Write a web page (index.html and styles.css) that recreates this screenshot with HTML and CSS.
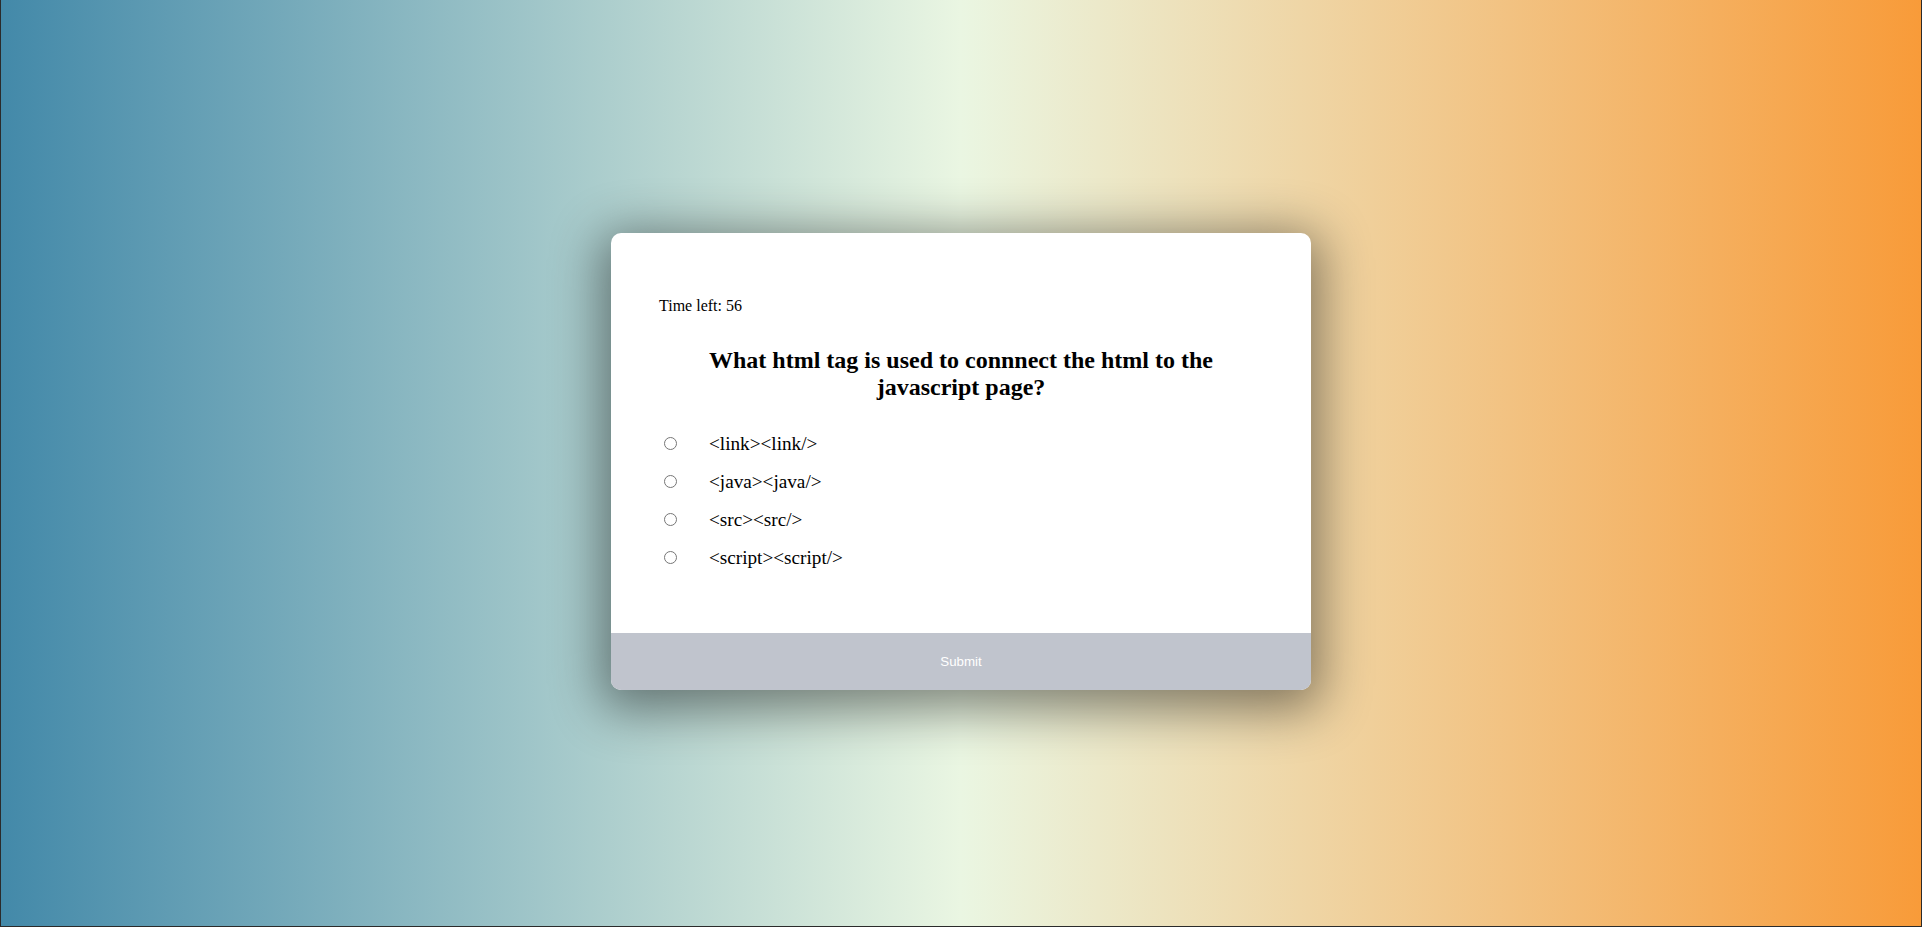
FILE: index.html
```html
<!DOCTYPE html>
<html lang="en">
<head>
    <meta charset="UTF-8">
    <meta name="viewport" content="width=device-width, initial-scale=1.0">
    <title>Quiz</title>
    <link rel="stylesheet" href="styles.css">
</head>
<body>
    <div class="quiz-container" id="quiz">
        <div class="quiz-header">
            <p class="timer">Time left: <span id="time">56</span></p>
            <h2 id="question">What html tag is used to connnect the html to the javascript page?</h2>
            <ul>
                <li><input type="radio" name="answer" id="a" class="answer"><label for="a" id="a_text">&lt;link&gt;&lt;link/&gt;</label></li>
                <li><input type="radio" name="answer" id="b" class="answer"><label for="b" id="b_text">&lt;java&gt;&lt;java/&gt;</label></li>
                <li><input type="radio" name="answer" id="c" class="answer"><label for="c" id="c_text">&lt;src&gt;&lt;src/&gt;</label></li>
                <li><input type="radio" name="answer" id="d" class="answer"><label for="d" id="d_text">&lt;script&gt;&lt;script/&gt;</label></li>
            </ul>
        </div>
        <button id="submit">Submit</button>
    </div>
</body>
</html>
```

FILE: styles.css
```css
html {
    background: #2b2b2b;
    height: 100%;
}
body {
    box-sizing: border-box;
    margin: 0 1px 1px 1px;
    padding-bottom: 3px;
    height: calc(100% - 1px);
    background: linear-gradient(to right, #4389a9, #eaf6e2, #f89b39);
    font-family: "Liberation Serif", "Times New Roman", serif;
    display: flex;
    align-items: center;
    justify-content: center;
}
.quiz-container {
    background-color: #fff;
    border-radius: 10px;
    width: 700px;
    overflow: hidden;
    box-shadow: 0 10px 50px 10px rgba(0, 0, 0, 0.45);
}
.quiz-header {
    padding: 3rem;
}
.timer {
    margin: 1rem 0;
    font-size: 16px;
}
h2 {
    padding: 1rem;
    margin: 0;
    text-align: center;
}
ul {
    list-style-type: none;
    padding: 0;
}
ul li {
    font-size: 1.2rem;
    margin: 1rem 0;
}
ul li label {
    margin-left: 29px;
}
button {
    display: block;
    width: 100%;
    border: none;
    padding: 1.3rem;
    background-color: #c0c4cd;
    color: #fff;
    font-family: "Liberation Sans", Arial, sans-serif;
    font-size: 13.33px;
    cursor: pointer;
}
```
